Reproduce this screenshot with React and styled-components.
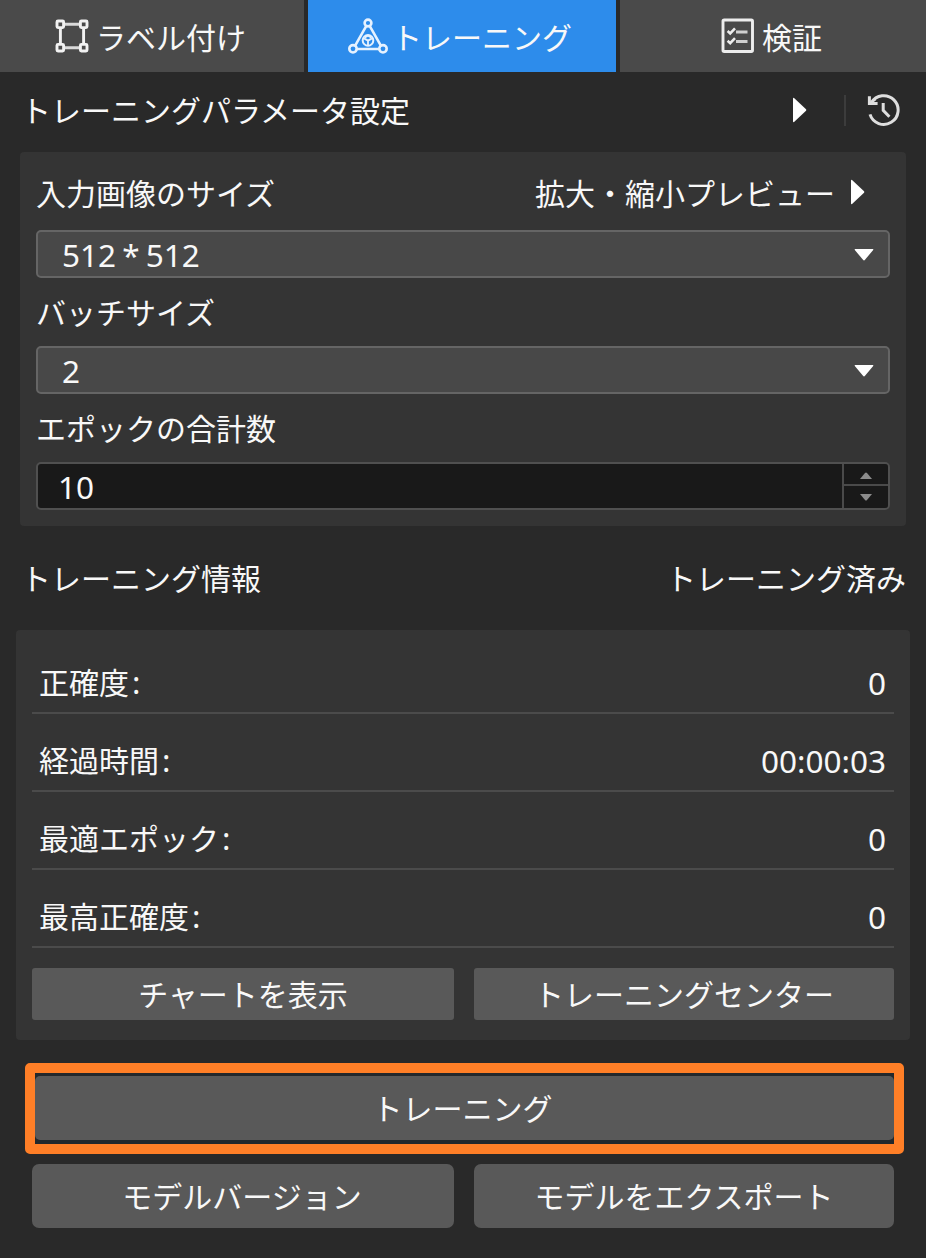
import React from "react";
import styled, { createGlobalStyle } from "styled-components";

const Global = createGlobalStyle`
  *, *::before, *::after { box-sizing: border-box; }
  html, body { margin: 0; background: #292929; }
  body {
    font-family: "Noto Sans CJK JP", sans-serif;
    font-size: 30px;
    line-height: 40px;
    color: #f8f8f8;
  }
  button { font: inherit; color: inherit; border: 0; padding: 0; margin: 0; }
`;

const Window = styled.main`
  width: 926px;
  height: 1258px;
  overflow: hidden;
  background: #292929;
  display: flex;
  flex-direction: column;
`;

const TabBar = styled.nav`
  display: grid;
  grid-template-columns: 304px 308px 306px;
  column-gap: 4px;
  height: 72px;
  flex: none;
`;

const Tab = styled.button`
  display: flex;
  align-items: center;
  padding: 0 0 0 ${(p) => p.$inset}px;
  gap: ${(p) => p.$gap}px;
  white-space: nowrap;
  background: ${(p) => (p.$active ? "#2d8ceb" : "#4a4a4a")};
  svg { flex: none; }
  span { padding-bottom: 1px; }
`;

const Heading = styled.header`
  display: flex;
  align-items: center;
  justify-content: space-between;
  height: ${(p) => p.$height}px;
  padding: 0 20px ${(p) => p.$lift}px 21px;
  flex: none;
  white-space: nowrap;
`;

const HeadingText = styled.span`
  padding-bottom: 2px;
`;

const Tools = styled.div`
  display: flex;
  align-items: center;
  margin-right: 5px;
`;

const Separator = styled.span`
  width: 2px;
  height: 31px;
  background: #3c3c3c;
  margin: 0 21px 0 37px;
`;

const ParamPanel = styled.section`
  margin: 0 20px;
  height: 374px;
  padding: 20px 16px 0;
  background: #343434;
  border-radius: 4px;
  flex: none;
`;

const LabelRow = styled.div`
  display: flex;
  justify-content: space-between;
  align-items: center;
  height: ${(p) => p.$height || 68}px;
  padding: 0 25px ${(p) => (p.$height ? 18 : 2)}px 0;
`;

const Preview = styled.span`
  display: flex;
  align-items: center;
  gap: 15px;
`;

const Latin = styled.span`
  font-family: "Noto Sans", sans-serif;
  font-size: 31.5px;
  word-spacing: ${(p) => p.$word || 0}px;
`;

const Select = styled.div`
  height: 48px;
  display: flex;
  align-items: center;
  justify-content: space-between;
  padding: 2px 14px 0 24px;
  border: 2px solid #656565;
  border-radius: 5px;
  background: #484848;
`;

const Spin = styled.div`
  height: 48px;
  display: flex;
  align-items: stretch;
  justify-content: space-between;
  border: 2px solid #505050;
  border-radius: 5px;
  background: #191919;
`;

const SpinValue = styled.div`
  display: flex;
  align-items: center;
  padding: 2px 0 0 20px;
`;

const Stepper = styled.div`
  width: 46px;
  display: grid;
  grid-template-rows: 20px 1fr;
  row-gap: 2px;
  padding-left: 2px;
  background: #4a4a4a;
  border-radius: 0 3px 3px 0;
  overflow: hidden;
`;

const Step = styled.div`
  display: flex;
  align-items: center;
  justify-content: center;
  padding-top: ${(p) => p.$drop || 0}px;
  background: #191919;
`;

const InfoPanel = styled.section`
  margin: 0 16px;
  height: 410px;
  padding: 6px 16px 0;
  background: #343434;
  border-radius: 4px;
  flex: none;
`;

const InfoRow = styled.div`
  height: 78px;
  display: flex;
  justify-content: space-between;
  align-items: flex-end;
  padding: 0 8px 9px 7px;
  border-bottom: 2px solid #4b4b4b;
`;

const InfoLabel = styled.span`
  padding-bottom: 1px;
`;

const Colon = styled(Latin)`
  margin-left: 3px;
`;

const ButtonRow = styled.div`
  display: grid;
  grid-template-columns: 422px 420px;
  column-gap: 20px;
  margin: ${(p) => p.$margin};
`;

const Button = styled.button`
  height: ${(p) => p.$height}px;
  padding: 0 ${(p) => p.$shift || 0}px 2px 0;
  border-radius: ${(p) => p.$radius}px;
  background: #595959;
  display: flex;
  align-items: center;
  justify-content: center;
  white-space: nowrap;
`;

const Highlight = styled.div`
  margin: 23px 22px 0 25px;
  height: 91px;
  padding: 3px 0 4px;
  border: 10px solid #ff7f27;
  border-radius: 5px;
  background: #23282c;
  flex: none;
  ${Button} { width: 100%; }
`;

const BoxIcon = () => (
  <svg width="34" height="34" viewBox="0 0 34 34" fill="none" stroke="#f2f2f2" strokeWidth="2.9">
    <path d="M9 5.2H25M9 28.8H25" stroke="#dadada" />
    <path d="M5.4 9V25M28.6 9V25" />
    <rect x="2" y="2" width="6.6" height="6.6" rx="1" />
    <rect x="25.4" y="2" width="6.6" height="6.6" rx="1" />
    <rect x="2" y="25.4" width="6.6" height="6.6" rx="1" />
    <rect x="25.4" y="25.4" width="6.6" height="6.6" rx="1" />
  </svg>
);

const NetIcon = () => (
  <svg width="40" height="36" viewBox="0 0 40 36" fill="none" stroke="#e6f2ff" strokeWidth="2.6">
    <circle cx="20" cy="5" r="3.4" />
    <circle cx="5" cy="30.8" r="3.7" />
    <circle cx="35" cy="30.8" r="3.7" />
    <path d="M18.2 8.2L7 27.8M21.8 8.2L33 27.8M9 31H31" />
    <circle cx="20" cy="22.4" r="5.3" strokeWidth="2" />
    <path d="M16 20.4L20 22.6L24 20.4M20 22.6V27.4M16.8 19.4L20 17.8L23.2 19.4" strokeWidth="1.8" />
  </svg>
);

const CheckListIcon = () => (
  <svg width="34" height="36" viewBox="0 0 34 36" fill="none" stroke="#ededed">
    <rect x="2" y="2" width="29.5" height="31.5" rx="1.2" strokeWidth="2.9" />
    <path d="M6.6 13L9.2 15.4L14 10.4M6.6 22.8L9.2 25.2L14 20.2" strokeWidth="2.6" />
    <path d="M15 14H26.5M15 23.6H26.5" strokeWidth="3" stroke="#d0d0d0" />
  </svg>
);

const HistoryIcon = () => (
  <svg width="34" height="34" viewBox="0 0 34 34" fill="none" stroke="#dedede" strokeWidth="3">
    <path d="M4.4 9.6A14.4 14.4 0 1 1 3 21.4" />
    <path d="M2.4 3.2V10.6H10.6" />
    <path d="M4 9.6L8.6 6" strokeWidth="2.4" />
    <path d="M16.2 10V17.4L22.4 23.8" />
  </svg>
);

const Right = () => (
  <svg width="15" height="26" viewBox="0 0 15 26" fill="#fff">
    <path d="M1 2Q1 0 2.6 1.4L14 12.2Q14.8 13 14 13.8L2.6 24.6Q1 26 1 24Z" />
  </svg>
);

const Down = () => (
  <svg width="20" height="12" viewBox="0 0 20 12" fill="#fff">
    <path d="M1.2 0H18.8Q20 0 19 1.2L11 10.8Q10 12 9 10.8L1 1.2Q0 0 1.2 0Z" />
  </svg>
);

const Arrow = ({ d }) => (
  <svg width="12" height="7" viewBox="0 0 12 7" fill="#8c8c8c">
    <path d={d} />
  </svg>
);

const info = [
  ["正確度", "0"],
  ["経過時間", "00:00:03"],
  ["最適エポック", "0"],
  ["最高正確度", "0"],
];

export default function App() {
  return (
    <Window>
      <Global />
      <TabBar>
        <Tab $inset={55} $gap={7}><BoxIcon /><span>ラベル付け</span></Tab>
        <Tab $inset={40} $gap={4} $active><NetIcon /><span>トレーニング</span></Tab>
        <Tab $inset={101} $gap={7}><CheckListIcon /><span>検証</span></Tab>
      </TabBar>

      <Heading $height={80} $lift={4}>
        <HeadingText>トレーニングパラメータ設定</HeadingText>
        <Tools>
          <Right />
          <Separator />
          <HistoryIcon />
        </Tools>
      </Heading>
      <ParamPanel>
        <LabelRow $height={58}>
          <span>入力画像のサイズ</span>
          <Preview>拡大・縮小プレビュー<Right /></Preview>
        </LabelRow>
        <Select><Latin $word={-2}>512 * 512</Latin><Down /></Select>
        <LabelRow><span>バッチサイズ</span></LabelRow>
        <Select><Latin>2</Latin><Down /></Select>
        <LabelRow><span>エポックの合計数</span></LabelRow>
        <Spin>
          <SpinValue><Latin>10</Latin></SpinValue>
          <Stepper>
            <Step $drop={3}><Arrow d="M0 7L5 1Q6 0 7 1L12 7Z" /></Step>
            <Step><Arrow d="M0 0L5 6Q6 7 7 6L12 0Z" /></Step>
          </Stepper>
        </Spin>
      </ParamPanel>

      <Heading $height={104} $lift={0}>
        <HeadingText>トレーニング情報</HeadingText>
        <HeadingText>トレーニング済み</HeadingText>
      </Heading>
      <InfoPanel>
        {info.map(([label, value]) => (
          <InfoRow key={label}>
            <InfoLabel>{label}<Colon>:</Colon></InfoLabel>
            <Latin>{value}</Latin>
          </InfoRow>
        ))}
        <ButtonRow $margin="20px 0 0">
          <Button $height={52} $radius={3}>チャートを表示</Button>
          <Button $height={52} $radius={3}>トレーニングセンター</Button>
        </ButtonRow>
      </InfoPanel>

      <Highlight>
        <Button $height={64} $radius={5} $shift={4}>トレーニング</Button>
      </Highlight>
      <ButtonRow $margin="10px 32px 0">
        <Button $height={64} $radius={7} $shift={2}>モデルバージョン</Button>
        <Button $height={64} $radius={7}>モデルをエクスポート</Button>
      </ButtonRow>
    </Window>
  );
}
